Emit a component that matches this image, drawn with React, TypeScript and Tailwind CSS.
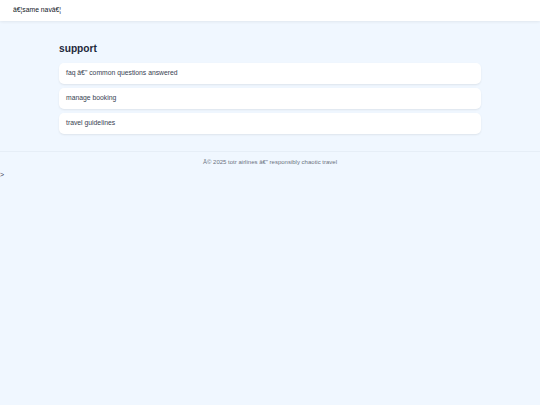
export default function App() {
  const links = ['faq â€" common questions answered', 'manage booking', 'travel guidelines']

  return (
    <div className="min-h-[405px] bg-[#f0f7ff] text-[#1e293b]" style={{ fontFamily: '"Liberation Sans", Arial, sans-serif' }}>
      {/* Header */}
      <header className="h-[21px] bg-white flex items-center px-[13px] shadow-[0_1px_3px_rgba(0,0,0,0.07)]">
        <span className="text-[6.8px] text-[#111827]">â€¦same navâ€¦</span>
      </header>

      {/* Main */}
      <main className="mx-[59px] pt-[21px] pb-[17px]">
        <h1 className="text-[10.2px] font-bold text-[#1e293b] leading-[14px] mb-[7px]">support</h1>
        <div className="flex flex-col gap-[4px]">
          {links.map(l => (
            <div
              key={l}
              className="h-[21px] bg-white rounded-[5px] flex items-center px-[7px] text-[6.8px] text-[#374151] shadow-[0_1px_2px_rgba(0,0,0,0.08)]"
            >
              {l}
            </div>
          ))}
        </div>
      </main>

      {/* Footer */}
      <footer className="border-t border-[#e6eef7] h-[21px] flex items-center justify-center">
        <span className="text-[6px] text-[#6b7280]">Â© 2025 totr airlines â€" responsibly chaotic travel</span>
      </footer>
      <div className="text-[7px] text-[#374151] leading-[10px] mt-[-2px]">&gt;</div>
    </div>
  )
}
